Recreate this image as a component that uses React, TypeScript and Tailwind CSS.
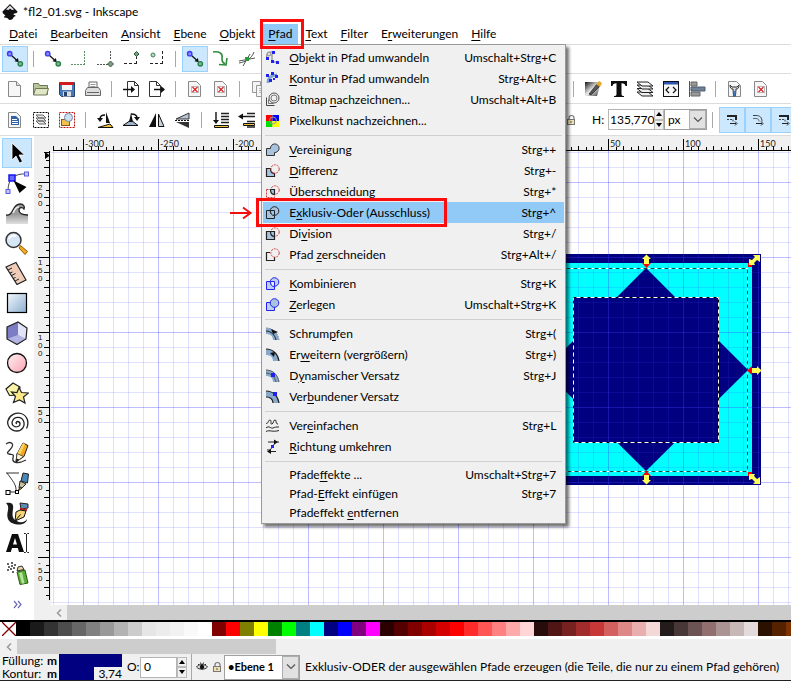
import { Fragment, ReactNode } from "react";

/* ---------- helpers ---------- */

// "[x]" marks the underlined access key of a label
function Label({ text }: { text: string }) {
  return (
    <span className="whitespace-pre">
      {text.split(/\[(.+?)\]/).map((part, i) =>
        i % 2 ? (
          <span key={i} className="underline underline-offset-2">
            {part}
          </span>
        ) : (
          <Fragment key={i}>{part}</Fragment>
        )
      )}
    </span>
  );
}

function Icon({ size, children }: { size: number; children: ReactNode }) {
  return (
    <svg
      width={size}
      height={size}
      viewBox={`0 0 ${size} ${size}`}
      fill="none"
      className="shrink-0"
      aria-hidden="true"
    >
      {children}
    </svg>
  );
}

/* ---------- toolbar icons (18 x 18) ---------- */

const page = (
  <path d="M2.500 1.500h8l4 4v11h-12z" fill="#f6f6f6" stroke="#888" />
);

const snapNodes = (
  <>
    <path d="M5 5l5.500 5" stroke="#111" strokeWidth="1.300" />
    <path d="M12.800 12.200l-4.300-.9 3.400-3.400z" fill="#111" />
    <circle cx="3.700" cy="3.700" r="2.200" fill="#8a8aff" stroke="#3c3cf0" strokeWidth="1.400" />
    <circle cx="14.300" cy="13.800" r="2.200" fill="#6fc08c" stroke="#2e7d4c" strokeWidth="1.400" />
  </>
);

const icons: Record<string, ReactNode> = {
  snapNodes,
  bboxEdge: (
    <path d="M14.500 1v14M1 14.500h13" stroke="#5d8f68" strokeDasharray="2 1" />
  ),
  bboxCorner: (
    <>
      <path d="M14.500 1v9M1 14.500h11" stroke="#555" strokeDasharray="2 1" />
      <path d="M14.500 11l3 3-3 3-3-3z" fill="#7d9b84" stroke="#3f5f46" />
    </>
  ),
  bboxMid: (
    <>
      <path d="M14.500 6v8M2 13.500h12" stroke="#222" strokeDasharray="3 2" />
      <path d="M14.500 1.500l2.500 2.500-2.500 2.500L12 4z" fill="#6fa67e" stroke="#33553b" />
    </>
  ),
  bboxCenter: (
    <>
      <path d="M14.500 1v13M2 13.500h12" stroke="#222" strokeDasharray="3 2" />
      <circle cx="5" cy="5" r="2" fill="#b9d8c0" stroke="#447a52" />
    </>
  ),
  snapPath: (
    <>
      <path d="M1 2c7-1 10 2 9 6 0 3 0 4 3 6" stroke="#2f8c3c" strokeWidth="1.600" />
      <path d="M7 14.500l7 .5 1-7" stroke="#2f8c3c" strokeWidth="1.600" />
    </>
  ),
  snapCross: (
    <>
      <path d="M1 13C8 12 14 8 16 2M1 11l16-3M5 16l7-12" stroke="#555" />
      <rect x="7" y="7" width="4" height="4" fill="#2f9a3c" />
    </>
  ),
  docNew: <>{page}<path d="M10.500 1.500v4h4" fill="#ddd" stroke="#888" /></>,
  docOpen: (
    <>
      <path d="M1.500 14.500v-11h5l1 2h8v9z" fill="#b9c59a" stroke="#6d7750" />
      <path d="M3.500 8.500h13l-2 6.500h-13z" fill="#dfe6c5" stroke="#6d7750" />
    </>
  ),
  save: (
    <>
      <path d="M1.500 2.500h15v14h-13l-2-2z" fill="#4778b8" stroke="#24426e" />
      <path d="M4 4h10v6H4z" fill="#f5f5f5" />
      <path d="M2 2h14v3H2z" fill="#d01c1c" />
      <path d="M5 11.500h8v5H5z" fill="#ddd" />
      <path d="M6 12h3v4H6z" fill="#24426e" />
    </>
  ),
  print: (
    <>
      <path d="M5 8V2h8v6" fill="#fff" stroke="#666" />
      <path d="M6.500 4.500h5M6.500 6.500h5" stroke="#999" />
      <path d="M1.500 15.500v-5l2-3h11l2 3v5z" fill="#ddd" stroke="#666" />
      <path d="M3 12.500h12" stroke="#666" />
    </>
  ),
  importDoc: (
    <>
      <path d="M5.500 1.500h7l4 4v11h-11z" fill="#fff" stroke="#333" />
      <path d="M12.500 1.500v4h4" stroke="#333" />
      <path d="M1 9.500h9" stroke="#111" strokeWidth="1.500" />
      <path d="M9 6l4 3.500L9 13z" fill="#111" />
    </>
  ),
  exportDoc: (
    <>
      <path d="M1.500 1.500h7l4 4v11h-11z" fill="#fff" stroke="#333" />
      <path d="M8.500 1.500v4h4" stroke="#333" />
      <path d="M6 9.500h8" stroke="#111" strokeWidth="1.500" />
      <path d="M13 6l4 3.500-4 3.500z" fill="#111" />
    </>
  ),
  docMissing: (
    <>
      {page}
      <rect x="5.500" y="6.500" width="7" height="6" fill="#fff" stroke="#bbb" />
      <path d="M6.500 7l5 5m0-5l-5 5" stroke="#e02020" strokeWidth="1.200" />
    </>
  ),
  copy: (
    <>
      <path d="M2.500 1.500h8v11h-8z" fill="#f5f5f5" stroke="#999" />
      <path d="M6.500 5.500h10v11h-10z" fill="#f5f5f5" stroke="#999" />
      <path d="M9 8.500h6M9 10.500h6M9 12.500h6" stroke="#bbb" />
    </>
  ),
  docProps: (
    <>
      {page}
      <path d="M5 5h5l3 3v6H5z" fill="#2f62a8" />
      <path d="M6 8.500h5M6 10.500h6M6 12.500h6" stroke="#fff" />
    </>
  ),
  selectLayers: (
    <>
      <rect x="1.500" y="1.500" width="15" height="15" stroke="#000" strokeDasharray="2 1" />
      <path d="M4 10h7l3 3H7zM4 7h7l3 3H7zM4 4h7l3 3H7z" fill="#e5e5e5" stroke="#666" />
    </>
  ),
  selectObjects: (
    <>
      <rect x="1.500" y="1.500" width="15" height="15" stroke="#c01010" strokeDasharray="2 1" />
      <rect x="3.500" y="8.500" width="8" height="6" fill="#f4c04a" stroke="#8c5a14" />
      <circle cx="10.500" cy="6.500" r="4" fill="#cfe0f4" stroke="#7089ab" />
    </>
  ),
  rotateLeft: (
    <>
      <path d="M2 16.500h15l-3-3.500z" fill="#f2c53a" stroke="#111" />
      <path d="M10 12V1l4 11z" fill="#111" />
      <path d="M9 4C5 4 4 6 4 8" stroke="#111" strokeWidth="1.500" />
      <path d="M1 7h6l-3 4z" fill="#111" />
    </>
  ),
  rotateRight: (
    <>
      <path d="M1 14.500h15L9 9z" fill="#9fb4cc" stroke="#111" />
      <path d="M7 11l2-9 2 9z" fill="#111" />
      <path d="M9 3c4 0 6 1 6 4" stroke="#111" strokeWidth="1.500" />
      <path d="M12 6h6l-3 4z" fill="#111" />
    </>
  ),
  flipH: (
    <>
      <path d="M8 2v14H1z" fill="#111" />
      <path d="M10.500 3v12.500h5.500z" fill="#c9d2dc" stroke="#111" />
    </>
  ),
  flipV: (
    <>
      <path d="M15 2v6H2z" fill="#b5c3d4" stroke="#333" />
      <path d="M1 9.500h15" stroke="#111" strokeDasharray="2 1" />
      <path d="M15 11v6L2 11z" fill="#333" />
    </>
  ),
  lower: (
    <>
      <path d="M9 2.500h8M9 5.500h8M9 8.500h8M9 11.500h8" stroke="#222" strokeWidth="1.600" />
      <path d="M4 1v10" stroke="#111" strokeWidth="1.400" />
      <path d="M1 9h6l-3 4z" fill="#111" />
      <path d="M2.500 14.500h14v2h-14z" fill="#f2c53a" stroke="#111" />
    </>
  ),
  lowerOne: (
    <>
      <path d="M9 2.500h8M9 5.500h8M9 10.500h8M9 16h8" stroke="#222" strokeWidth="1.600" />
      <path d="M3 5.500h6" stroke="#111" strokeWidth="1.400" />
      <path d="M5 2.500v6L0 5.500z" fill="#111" />
      <path d="M5.500 12.500h11v2h-11z" fill="#f2c53a" stroke="#111" />
    </>
  ),
  fillStroke: (
    <>
      <defs>
        <linearGradient id="steel" x1="0" y1="0" x2="1" y2="1">
          <stop offset="0" stopColor="#111" />
          <stop offset=".5" stopColor="#eee" />
          <stop offset="1" stopColor="#222" />
        </linearGradient>
      </defs>
      <path d="M1 2h16l-4 14H1z" fill="url(#steel)" />
      <path d="M5 14l8-10 3 2-9 9z" fill="#555" stroke="#222" strokeWidth=".7" />
      <path d="M12 4l3-3 3 2-2 4z" fill="#e4a82c" />
    </>
  ),
  textTool: <path d="M1 1h16v5h-1.500c-.3-2-1.500-2.800-4-2.800V14c0 1.500.6 2 2.500 2v1H4v-1c1.900 0 2.500-.5 2.500-2V3.200c-2.500 0-3.700.8-4 2.800H1z" fill="#0d0d0d" />,
  layers: (
    <>
      <path d="M1 12h11l5 4H6z" fill="#eee" stroke="#222" />
      <path d="M1 8.500h11l5 4H6z" fill="#eee" stroke="#222" />
      <path d="M1 5h11l5 4H6z" fill="#eee" stroke="#222" />
      <path d="M1 2h11l5 4H6z" fill="#fafafa" stroke="#222" />
    </>
  ),
  xml: (
    <>
      <rect x="1.500" y="1.500" width="15" height="15" fill="#f7f7f7" stroke="#111" />
      <path d="M2 2h14v2.500H2z" fill="#2f55b0" />
      <path d="M7 7l-3 3 3 3M11 7l3 3-3 3" stroke="#111" strokeWidth="1.200" />
    </>
  ),
  align: (
    <>
      <path d="M1.500 1v16" stroke="#d02020" />
      <path d="M3 2h6v4H3zM3 12h9v4H3z" fill="#999" stroke="#666" />
      <path d="M3 7h14v4H3z" fill="#6f8296" stroke="#4e5d6e" />
    </>
  ),
  prefs: (
    <>
      {page}
      <path d="M4 5c0 3 1 4 3 4l.5 7h2L10 9c2 0 3-1 3-4l-2 2H6z" fill="#d0d7de" stroke="#333" />
      <path d="M7.500 11h2v5h-2z" fill="#3d74b8" />
    </>
  ),
  scaleStroke: (
    <>
      <path d="M4 5h9v4" stroke="#222" strokeWidth="2" />
      <path d="M4 8.500h6v2" stroke="#444" strokeDasharray="2 1" />
      <path d="M7 12.500h6M12 10.500l2 2-2 2" stroke="#222" />
    </>
  ),
  scaleCorners: (
    <>
      <path d="M4 4.500h3c4 0 6 2 6 6" stroke="#444" />
      <path d="M4 7.500h3c2 0 3 1 3 3" stroke="#666" />
      <path d="M7 12.500h6M12 10.500l2 2-2 2" stroke="#222" />
    </>
  ),
};

/* ---------- toolbox icons (24 x 24) ---------- */

const tools: { name: string; icon: ReactNode }[] = [
  {
    name: "Auswahl",
    icon: <path d="M7 2v17l4-4 3.500 7 3-1.500-3.500-6.500h5.500z" fill="#000" stroke="#fff" strokeWidth=".8" />,
  },
  {
    name: "Knoten",
    icon: (
      <>
        <path d="M3 20C3 8 9 2 22 3" stroke="#444" />
        <rect x="1" y="18.500" width="4" height="4" fill="#c5c5ff" stroke="#5a5ae0" />
        <rect x="19.500" y="1" width="4" height="4" fill="#c5c5ff" stroke="#5a5ae0" />
        <rect x="4" y="4" width="6" height="6" fill="#6a6aff" stroke="#1616f0" strokeWidth="1.500" />
        <path d="M8.500 9.500l13 6.500-7 6z" fill="#000" />
      </>
    ),
  },
  {
    name: "Modellieren",
    icon: (
      <>
        <defs>
          <linearGradient id="wave" x1="0" y1="0" x2="0" y2="1">
            <stop offset=".5" stopColor="#999" />
            <stop offset="1" stopColor="#e0e0e0" />
          </linearGradient>
        </defs>
        <path d="M1 14c8 1 6-11 14-11 4 0 5 3 4 5-1-2-5-2-5 1 0 3 2 5 9 5v9H1z" fill="url(#wave)" />
        <path d="M1 14c8 1 6-11 14-11 4 0 5 3 4 5-1-2-5-2-5 1 0 3 2 5 9 5" stroke="#222" strokeWidth="1.300" />
        <path d="M8 12c2-4 3-6 6-6" stroke="#eee" strokeWidth="1.500" />
      </>
    ),
  },
  {
    name: "Zoom",
    icon: (
      <>
        <path d="M15.500 14.500l7 6-2.500 3-6-6.500z" fill="#f5a91c" stroke="#8b5a00" />
        <circle cx="8.500" cy="9" r="7.500" fill="#d6e6f7" stroke="#333" strokeWidth="1.500" />
        <path d="M4 8c1-3 4-4 7-3" stroke="#fff" strokeWidth="2" />
      </>
    ),
  },
  {
    name: "Messen",
    icon: (
      <>
        <path d="M1 6l10-4.500L21 19l-9 4.500z" fill="#f1cdb9" stroke="#222" strokeWidth="1.200" />
        <path d="M3 9l4-2M5 12l2.500-1M6.500 14.500l4-2M8 17.500l2.500-1M10 20l4-2" stroke="#222" />
      </>
    ),
  },
  {
    name: "Rechteck",
    icon: (
      <>
        <defs>
          <linearGradient id="sky" x1="0" y1="0" x2="1" y2="1">
            <stop offset="0" stopColor="#f2f7fb" />
            <stop offset="1" stopColor="#8bafd0" />
          </linearGradient>
        </defs>
        <rect x="2.500" y="2.500" width="19" height="19" fill="url(#sky)" stroke="#000" strokeWidth="1.200" />
      </>
    ),
  },
  {
    name: "3D-Box",
    icon: (
      <>
        <path d="M2 6l11-5 9 6-1 11-9 5.500L2 18z" fill="#9a9ad6" />
        <path d="M2 6l11-5v13l-11 4z" fill="#7c7cc4" />
        <path d="M13 1l9 6-1 11-8-4z" fill="#e3e3f8" />
        <path d="M2 18l11-4 8 4-9 5.500z" fill="#b4b4e4" />
        <path d="M2 6l11-5 9 6-1 11-9 5.500L2 18z" stroke="#222" strokeWidth="1.200" />
      </>
    ),
  },
  {
    name: "Ellipse",
    icon: (
      <>
        <defs>
          <linearGradient id="rose" x1="0" y1="0" x2="1" y2="1">
            <stop offset="0" stopColor="#fff2f4" />
            <stop offset="1" stopColor="#f9a3b0" />
          </linearGradient>
        </defs>
        <circle cx="12" cy="12" r="9.500" fill="url(#rose)" stroke="#111" strokeWidth="1.300" />
      </>
    ),
  },
  {
    name: "Stern",
    icon: (
      <>
        <path d="M8 2l7 4-1.500 8-9 .5L1 8z" fill="#fbf3a8" stroke="#222" strokeWidth="1.200" />
        <path d="M14 6.500l2.500 5 7 .5-5 4 1.500 6-5.500-3-6 2.500 2-6-4-4.500 5.500.5z" fill="#fbe98a" stroke="#222" strokeWidth="1.200" />
      </>
    ),
  },
  {
    name: "Spirale",
    icon: (
      <path
        d="M12 12.500c-1.500.5-1-2 .5-2 3 0 3.500 4 .5 5-4 1.500-7-2-5.500-5.500 2-5 9-4.500 11 0C20.500 15 17 20 12 20 5.500 20 1.500 14.500 3 9.500 4.500 4 11 1 16 2.500c6.500 2 8.500 9 5.500 15"
        stroke="#222"
        strokeWidth="1.300"
      />
    ),
  },
  {
    name: "Freihand",
    icon: (
      <>
        <path d="M1 3c4-3 8-1 6 3s-7 6-3 7 5 0 4 4 3 7 13 2" stroke="#333" strokeWidth="1.300" />
        <path d="M11 21l1-8 6-11 5 2.500-4 11z" fill="#f6a81c" stroke="#222" />
        <path d="M12 13l6-11 2 1-5 11z" fill="#fbd665" />
        <path d="M12 12.500l6.500 3L11 21z" fill="#fff3cf" stroke="#222" strokeWidth=".7" />
        <path d="M11.500 17.500l2.500 1L11 21.500z" fill="#111" />
      </>
    ),
  },
  {
    name: "Bézier",
    icon: (
      <>
        <path d="M1 2h13M2 2c5 7 10 12 9 19h-8" stroke="#333" />
        <path d="M16 10l2-8 5.500 1-1 9z" fill="#4a86b8" stroke="#222" />
        <path d="M15 10l6 3-5 5-2-1z" fill="#c8bfa4" stroke="#222" />
        <path d="M13 20l2-4 2 1z" fill="#f0ad24" stroke="#222" />
        <rect x="1" y="19.500" width="4" height="4" fill="#fff" stroke="#000" />
        <rect x="10.500" y="19.500" width="3" height="3" fill="#fff" stroke="#000" />
      </>
    ),
  },
  {
    name: "Kalligrafie",
    icon: (
      <>
        <path d="M1 2c5-1 8 0 7 6-1 7-1 11 6 13 4 1 7-1 8-3 0 4-5 6-10 5.500C3 22.500 1 17 3 9c.5-3 0-5-2-7z" fill="#1a1a1a" />
        <path d="M15 2l8 1v4l-7 1z" fill="#5b8db4" stroke="#222" />
        <path d="M15 7l7 1v2l-7-1z" fill="#c22020" />
        <path d="M10 20l1-9 4-2 6 1-2 6z" fill="#f3d67a" stroke="#111" />
        <path d="M10.500 19.500l5-6" stroke="#111" />
      </>
    ),
  },
  {
    name: "Text",
    icon: (
      <>
        <path d="M1 21l6-18h6l6 18h-5l-1.200-4H7l-1.200 4zM8 13.500h4L10 7z" fill="#0c0c0c" />
        <path d="M19 2.500h1.500l1 1 1-1H24M21.500 3v18M19 21.500h1.500l1-1 1 1H24" stroke="#222" />
      </>
    ),
  },
  {
    name: "Sprühdose",
    icon: (
      <>
        <path d="M12 11l8-2 3 13-8 1.500z" fill="#5cae3a" stroke="#2b5a17" />
        <path d="M14 12l3-.7 2.500 11-2.500.5z" fill="#b5e39b" />
        <path d="M12 10l1-4 4-1 2 3.500z" fill="#e8d7a0" stroke="#333" />
        <path d="M2 3h2M6 2h2M9 4h2M3 6h2M6 5h2M2 9h2M5 8h2M8 7h2M7 11h2" stroke="#333" strokeWidth="1.500" />
      </>
    ),
  },
];

/* ---------- menu icons (16 x 16) ---------- */

const square = "M1.500 5.500h8v8h-8z";
const arcBand = "M1 2c7 0 12 5 13 12H8C8 10 5 8 1 8z";

const menuIcons: Record<string, ReactNode> = {
  objectToPath: (
    <>
      <path d="M2 9C1 3 3 2 7 2M7 4v8h6" stroke="#777" />
      <circle cx="4" cy="4" r="2" fill="#ddd" stroke="#888" />
      <path d="M7 1h3v3H7zM1 7h3v3H1zM6 10h3v3H6zM11 11h3v3h-3z" fill="#2020f0" />
    </>
  ),
  strokeToPath: (
    <>
      <path d="M3 12c0-5 3-8 9-8" stroke="#7fa4d0" strokeWidth="3" />
      <path d="M1 3h3v3H1zM6 1h3v3H6zM10 4h3v3h-3zM4 8h3v3H4zM8 7h2v2H8z" fill="#2020f0" />
    </>
  ),
  trace: (
    <>
      <path d="M1.500 5.500v8h8" stroke="#444" />
      <path d="M3.500 7.500v4h5" stroke="#777" />
      <circle cx="9" cy="6" r="5" stroke="#555" />
      <circle cx="9" cy="6" r="3" stroke="#777" />
    </>
  ),
  pixelArt: (
    <>
      <path d="M1 2h6.500v6H1z" fill="#f00" />
      <path d="M7.500 2H14v6H7.500z" fill="#00f" />
      <path d="M1 8h6.500v6H1z" fill="#0d0" />
      <path d="M7.500 8H14v6H7.500z" fill="#ff0" />
      <circle cx="8" cy="7.500" r="3.500" stroke="#999" />
    </>
  ),
  union: (
    <path d="M1.500 6.500h4a4.300 4.300 0 1 1 4 4v3h-8z" fill="#a9c3de" stroke="#333" />
  ),
  difference: (
    <>
      <path d="M1.500 5.500h4c0 3 1 5 4 5v3h-8z" fill="#a9c3de" stroke="#222" strokeWidth="1.200" />
      <circle cx="10" cy="6" r="4.200" stroke="#d04040" strokeDasharray="2 1" />
    </>
  ),
  intersection: (
    <>
      <path d={square} stroke="#d04040" strokeDasharray="2 1" />
      <circle cx="10" cy="6" r="4.200" stroke="#d04040" strokeDasharray="2 1" />
      <path d="M5.500 5.500h4v5c-3 0-4-2-4-5z" fill="#a9c3de" stroke="#222" strokeWidth="1.200" />
    </>
  ),
  exclusion: (
    <>
      <path d={square} fill="#a9c3de" stroke="#222" />
      <circle cx="9.500" cy="6" r="4.300" fill="#a9c3de" stroke="#222" />
      <path d="M5.500 5.500h4v5c-3 0-4-2-4-5z" fill="#91c9f7" stroke="#222" />
    </>
  ),
  division: (
    <>
      <circle cx="10" cy="6" r="4.200" stroke="#d04040" strokeDasharray="2 1" />
      <path d={square} fill="#a9c3de" stroke="#222" strokeWidth="1.200" />
      <path d="M5.500 5.500c0 3 1 5 4 5" stroke="#222" strokeWidth="1.200" />
    </>
  ),
  cut: (
    <>
      <path d="M5 5.500H1.500v8h8V10" stroke="#222" strokeWidth="1.200" />
      <circle cx="10" cy="6" r="4.200" stroke="#d04040" strokeDasharray="2 1" />
    </>
  ),
  combine: (
    <>
      <path d={square} fill="#bcd0f0" stroke="#2222f0" />
      <circle cx="9.500" cy="6" r="4.300" fill="#bcd0f0" stroke="#2222f0" />
      <path d="M5.500 5.500h4v5c-3 0-4-2-4-5z" fill="#f0f0f0" stroke="#2222f0" />
    </>
  ),
  breakApart: (
    <>
      <path d={square} fill="#bcd0f0" stroke="#2222f0" />
      <circle cx="9.500" cy="6" r="4.300" fill="#a9c3de" stroke="#2222f0" />
    </>
  ),
  inset: (
    <>
      <path d={arcBand} fill="#86a9cc" />
      <path d="M1 2c7 0 12 5 13 12" stroke="#88a" strokeDasharray="2 1" />
      <path d="M1 5c5 0 9 4 10 9" stroke="#222" />
      <path d="M13 6L6 3l2 5z" fill="#111" />
    </>
  ),
  outset: (
    <>
      <path d={arcBand} fill="#86a9cc" />
      <path d="M1 2c7 0 12 5 13 12" stroke="#222" strokeWidth="1.200" />
      <path d="M10 5L5 6l4 4z" fill="#111" />
    </>
  ),
  dynamicOffset: (
    <>
      <path d={arcBand} fill="#86a9cc" />
      <path d="M1 2c7 0 12 5 13 12M1 5c5 0 9 4 10 9" stroke="#555" />
      <path d="M6 5h4v4H6z" fill="#2222f0" />
    </>
  ),
  linkedOffset: (
    <>
      <path d={arcBand} fill="#86a9cc" />
      <path d="M1 2c7 0 12 5 13 12M1 8c4 0 7 2 7 6" stroke="#222" strokeWidth="1.200" />
      <path d="M8 3h4v4H8z" fill="#2222f0" />
    </>
  ),
  simplify: (
    <path
      d="M1 5c2 2 2-3 4-3s0 5 2 4 1-4 3-4 0 4 3 4M1 10c3-3 5 1 7 0s3-1 6-1M1 13.500c4-2 6 1 13-1"
      stroke="#222"
    />
  ),
  reverse: (
    <>
      <path d="M3 3h7M5 12.500h6M2 11c4 0 4-1 6-4s2-4 6-4" stroke="#222" />
      <path d="M9 .5L13 3 9 5.500zM6 10l-4 2.500L6 15z" fill="#111" />
      <path d="M6 6h3v3H6z" fill="#2222f0" />
    </>
  ),
};

type MenuEntry = { label: string; keys?: string; icon?: string; active?: boolean };

const pathMenu: MenuEntry[][] = [
  [
    { label: "[O]bjekt in Pfad umwandeln", keys: "Umschalt+Strg+C", icon: "objectToPath" },
    { label: "[K]ontur in Pfad umwandeln", keys: "Strg+Alt+C", icon: "strokeToPath" },
    { label: "Bitmap [n]achzeichnen...", keys: "Umschalt+Alt+B", icon: "trace" },
    { label: "Pixelkunst nachzeichnen...", icon: "pixelArt" },
  ],
  [
    { label: "[V]ereinigung", keys: "Strg++", icon: "union" },
    { label: "[D]ifferenz", keys: "Strg+-", icon: "difference" },
    { label: "[Üb]erschneidung", keys: "Strg+*", icon: "intersection" },
    { label: "E[x]klusiv-Oder (Ausschluss)", keys: "Strg+^", icon: "exclusion", active: true },
    { label: "Di[v]ision", keys: "Strg+/", icon: "division" },
    { label: "Pfad [z]erschneiden", keys: "Strg+Alt+/", icon: "cut" },
  ],
  [
    { label: "[K]ombinieren", keys: "Strg+K", icon: "combine" },
    { label: "[Z]erlegen", keys: "Umschalt+Strg+K", icon: "breakApart" },
  ],
  [
    { label: "Schrum[p]fen", keys: "Strg+(", icon: "inset" },
    { label: "Er[w]eitern (vergrößern)", keys: "Strg+)", icon: "outset" },
    { label: "D[y]namischer Versatz", keys: "Strg+J", icon: "dynamicOffset" },
    { label: "Ver[b]undener Versatz", icon: "linkedOffset" },
  ],
  [
    { label: "Ver[e]infachen", keys: "Strg+L", icon: "simplify" },
    { label: "[R]ichtung umkehren", icon: "reverse" },
  ],
  [
    { label: "Pfade[f]fekte ...", keys: "Umschalt+Strg+7" },
    { label: "Pfad-[E]ffekt einfügen", keys: "Strg+7" },
    { label: "Pfadeffekt [e]ntfernen" },
  ],
];

function PathMenu() {
  return (
    <div
      role="menu"
      className="absolute left-0 top-full z-20 w-[305px] border border-[#999] bg-[#f0f0f0] px-px pb-px pt-[2px] shadow-[3px_3px_3px_rgba(0,0,0,0.55)]"
    >
      {pathMenu.map((group, g) => (
        <Fragment key={g}>
          {g > 0 && (
            <div className="flex h-2 items-center px-[2px]">
              <hr className="w-full border-t border-[#d0d0d0]" />
            </div>
          )}
          {group.map((entry) => (
            <button
              key={entry.label}
              role="menuitem"
              className={`relative flex w-full items-center pl-[2px] pr-2 text-left ${
                entry.icon ? "h-[21px]" : "h-[19px]"
              } ${entry.active ? "bg-[#91c9f7]" : ""}`}
            >
              <span className="mr-2 flex w-4 shrink-0">
                {entry.icon && <Icon size={16}>{menuIcons[entry.icon]}</Icon>}
              </span>
              <span className="flex-1">
                <Label text={entry.label} />
              </span>
              {entry.keys && <span>{entry.keys}</span>}
              {entry.active && <Highlight />}
            </button>
          ))}
        </Fragment>
      ))}
    </div>
  );
}

// red frame and arrow pointing at the active entry
function Highlight() {
  return (
    <span className="pointer-events-none absolute -left-[7px] -top-1 flex h-[29px] w-[191px] border-[3px] border-[#fb0d0d]">
      <svg width="24" height="14" viewBox="0 0 24 14" fill="none" className="absolute -left-[30px] top-[5px]">
        <path d="M1 7h20M14 1.500L21.500 7 14 12.500" stroke="#f01010" strokeWidth="2" />
      </svg>
    </span>
  );
}

/* ---------- bars ---------- */

const menus = [
  "[D]atei",
  "[B]earbeiten",
  "[A]nsicht",
  "[E]bene",
  "[O]bjekt",
  "[P]fad",
  "[T]ext",
  "[F]ilter",
  "E[r]weiterungen",
  "[H]ilfe",
];

function MenuBar() {
  return (
    <nav className="flex h-5 pl-[2px]">
      {menus.map((label) =>
        label === "[P]fad" ? (
          <div key={label} className="relative flex">
            <button className="bg-[#91c9f7] pl-[7px] pr-[6px]">
              <Label text={label} />
            </button>
            <PathMenu />
            <span className="pointer-events-none absolute -left-px -top-[5px] z-30 h-[30px] w-[44px] border-[3px] border-[#fb0d0d]" />
          </div>
        ) : (
          <button key={label} className="pl-[7px] pr-[6px]">
            <Label text={label} />
          </button>
        )
      )}
    </nav>
  );
}

function ToolButtons({ items }: { items: string[] }) {
  return (
    <>
      {items.map((item, i) => {
        if (item === "|")
          return <span key={i} className="mx-[5px] h-4 w-[2px] shrink-0 border-l border-[#a8a8a8]" />;
        const active = item.startsWith("*");
        const name = item.replace("*", "");
        return (
          <button
            key={i}
            aria-label={name}
            className={`flex h-[26px] w-[26px] shrink-0 items-center justify-center ${
              active ? "border border-[#99d1ff] bg-[#cce8ff]" : ""
            }`}
          >
            <Icon size={18}>{icons[name]}</Icon>
          </button>
        );
      })}
    </>
  );
}

function Lock() {
  return (
    <Icon size={12}>
      <path d="M4 6V4a2.500 2.500 0 0 1 5 0v2" stroke="#777" strokeWidth="1.200" />
      <rect x="2.500" y="5.500" width="7" height="5" fill="#efe2b0" stroke="#777" />
      <path d="M6 7v2" stroke="#555" />
    </Icon>
  );
}

function Spin() {
  return (
    <div className="flex w-[10px] flex-col">
      <button aria-label="mehr" className="flex flex-1 items-center justify-center border border-[#bbb] bg-[#f0f0f0]">
        <svg width="6" height="4" viewBox="0 0 6 4"><path d="M0 4l3-4 3 4z" /></svg>
      </button>
      <button aria-label="weniger" className="flex flex-1 items-center justify-center border border-[#bbb] bg-[#f0f0f0]">
        <svg width="6" height="4" viewBox="0 0 6 4"><path d="M0 0h6L3 4z" /></svg>
      </button>
    </div>
  );
}

function DropDown({ label, value, className }: { label: string; value: string; className: string }) {
  return (
    <div className={`relative border border-[#a0a0a0] bg-white ${className}`}>
      <select aria-label={label} defaultValue={value} className="h-full w-full appearance-none pl-[3px] outline-none">
        <option>{value}</option>
      </select>
      <span className="pointer-events-none absolute inset-y-0 right-0 flex w-[17px] items-center justify-center border border-[#adadad] bg-[#e1e1e1]">
        <svg width="10" height="6" viewBox="0 0 10 6" fill="none">
          <path d="M1 .5l4 4 4-4" stroke="#555" strokeWidth="1.200" />
        </svg>
      </span>
    </div>
  );
}

function Toolbars() {
  return (
    <>
      <div className="flex h-[30px] items-center border-y border-[#dcdcdc] pl-[2px]">
        <ToolButtons
          items={["*snapNodes", "|", "snapNodes", "bboxEdge", "bboxCorner", "bboxMid", "bboxCenter", "|", "*snapNodes", "snapPath", "snapCross"]}
        />
      </div>
      <div className="flex h-[30px] items-center border-b border-[#dcdcdc]">
        <div className="flex w-[568px] shrink-0 items-center pl-[2px]">
          <ToolButtons
            items={["docNew", "docOpen", "save", "print", "|", "importDoc", "exportDoc", "|", "docMissing", "docMissing", "|", "copy"]}
          />
        </div>
        <ToolButtons
          items={["|", "fillStroke", "textTool", "layers", "xml", "align", "|", "prefs", "docMissing"]}
        />
      </div>
      <div className="flex h-8 items-center overflow-hidden border-b border-[#dcdcdc]">
        <div className="flex w-[565px] shrink-0 items-center pl-[2px]">
          <ToolButtons
            items={["docProps", "selectLayers", "selectObjects", "|", "rotateLeft", "rotateRight", "flipH", "flipV", "|", "lower", "lowerOne"]}
          />
        </div>
        <Lock />
        <label htmlFor="height" className="ml-[15px] w-4 shrink-0">
          H:
        </label>
        <div className="flex h-[21px] shrink-0">
          <input
            id="height"
            defaultValue="135,770"
            className="w-[46px] border border-r-0 border-[#b5b5b5] bg-white pl-px outline-none"
          />
          <Spin />
        </div>
        <DropDown label="Einheit" value="px" className="h-[21px] w-[43px] shrink-0" />
        <ToolButtons items={["|", "*scaleStroke", "*scaleCorners", "*scaleStroke"]} />
      </div>
    </>
  );
}

function Toolbox() {
  return (
    <aside className="flex w-[34px] shrink-0 flex-col items-center bg-white pt-[2px]">
      {tools.map((tool, i) => (
        <button
          key={tool.name}
          aria-label={tool.name}
          className={`flex h-[30px] w-[30px] items-center justify-center ${
            i === 0 ? "border border-[#99d1ff] bg-[#cce8ff]" : ""
          }`}
        >
          <Icon size={24}>{tool.icon}</Icon>
        </button>
      ))}
      <button aria-label="Weitere Werkzeuge" className="mt-3 flex h-[18px] items-start">
        <svg width="9" height="9" viewBox="0 0 9 9" fill="none">
          <path d="M1 1l3 3.500L1 8M5 1l3 3.500L5 8" stroke="#6a6ab8" strokeWidth="1.200" />
        </svg>
      </button>
    </aside>
  );
}

/* ---------- canvas ---------- */

const STEP = 75; // 50 user units

// the stretch between -200 and 50 lies under the open menu
const rulerLabels = [-300, -250, -200, 50, 100, 150];

function HorizontalRuler() {
  const ticks = Array.from({ length: 240 }, (_, i) => i);
  return (
    <svg className="ml-[17px] h-[15px] w-0 flex-1" aria-hidden="true">
      {ticks.map((i) => (
        <path
          key={i}
          d={`M${Math.round(2 + i * 7.5) + 0.5} ${i % 10 === 4 ? 3 : i % 2 ? 11 : 10}v12`}
          stroke="#000"
        />
      ))}
      {rulerLabels.map((value) => (
        <text key={value} x={34 + ((value + 300) / 50) * STEP} y="11" fontSize="9" fill="#222">
          {value}
        </text>
      ))}
      <path d="M2 14.500h3000" stroke="#000" />
    </svg>
  );
}

function VerticalRuler() {
  const ticks = Array.from({ length: 60 }, (_, i) => i);
  const labels = [200, 150, 100, 50, 0, -50];
  return (
    <svg className="w-[17px] shrink-0 font-['Liberation_Sans',sans-serif]" aria-hidden="true">
      {ticks.map((i) => (
        <path
          key={i}
          d={`M${i % 10 === 4 ? 4 : i % 2 ? 12 : 10} ${Math.round(1 + i * 7.5) + 0.5}H16`}
          stroke="#000"
        />
      ))}
      {labels.map((value, row) =>
        String(value)
          .split("")
          .map((c, n) => (
            <text key={`${value}${n}`} x="4" y={39 + row * STEP + n * 8} fontSize="8" fill="#111">
              {c}
            </text>
          ))
      )}
      <path d="M15.500 0v449" stroke="#000" />
      <path d="M11 1l5 3.500-5 3.500z" />
    </svg>
  );
}

const upArrow = "M0-5.500L4.500-1H2.500v5h-5v-5h-2z";

function Canvas() {
  return (
    <svg className="w-0 flex-1 bg-white" role="img" aria-label="Zeichenfläche">
      <defs>
        <pattern id="minor" x="2" y="1" width="15" height="15" patternUnits="userSpaceOnUse">
          <path d="M.5 0v15M0 .5h15" stroke="#3f3fff" strokeOpacity=".16" />
        </pattern>
        <pattern id="major" x="32" y="31" width="75" height="75" patternUnits="userSpaceOnUse">
          <path d="M.5 0v75M0 .5h75" stroke="#3f3fff" strokeOpacity=".22" />
        </pattern>
      </defs>
      <g transform="translate(480 103)">
        <path d="M0 0h230v231H0z" fill="#000080" />
        <path d="M9 9h212v213H9z" fill="#00ffff" />
        <path d="M115 14l102 102-102 101L13 116z" fill="#000080" />
        <path d="M43 43h145v145H43z" fill="#000080" />
      </g>
      <rect width="100%" height="100%" fill="url(#minor)" />
      <rect width="100%" height="100%" fill="url(#major)" />
      <g transform="translate(480 103)">
        <path d="M14.500 14.500h202v203h-202z" fill="none" stroke="#fff" />
        <path d="M14.500 14.500h202v203h-202z" fill="none" stroke="#055" strokeDasharray="4 3" />
        <path d="M42.500 43.500h145v145h-145z" fill="none" stroke="#fff" />
        <path d="M42.500 43.500h145v145h-145z" fill="none" stroke="#000" strokeDasharray="3 4" />
        <g fill="#f00">
          <path d="M111 9h9l-4.500 5zM111 222h9l-4.500-5zM221 112v9l-5-4.500zM217 9h4v4h-4zM217 218h4v4h-4z" />
        </g>
        <g fill="#ffff55">
          <path d={upArrow} transform="translate(115.500 6)" />
          <path d={upArrow} transform="translate(115.500 225) rotate(180)" />
          <path d={upArrow} transform="translate(225 116.500) rotate(90)" />
          <path d="M218 5v6h6l-1-2 3-3 3 2V1h-7l2 2-3 3zM218 226v-6h6l-1 2 3 3 3-2v7h-7l2-2-3-3z" />
        </g>
      </g>
    </svg>
  );
}

function ScrollBar({ thumb }: { thumb: string }) {
  return (
    <div className="flex h-[15px] shrink-0 bg-[#f0f0f0]">
      <button aria-label="Nach links" className="flex w-[17px] shrink-0 items-center justify-center">
        <svg width="6" height="8" viewBox="0 0 6 8" fill="none">
          <path d="M5 .5L1.500 4 5 7.500" stroke="#999" strokeWidth="1.500" />
        </svg>
      </button>
      <div className={`bg-[#cdcdcd] ${thumb}`} />
    </div>
  );
}

/* ---------- palette and status ---------- */

const palette = [
  "#000000", "#1a1a1a", "#333333", "#4d4d4d", "#666666", "#808080", "#999999",
  "#b3b3b3", "#cccccc", "#e6e6e6", "#ececec", "#f2f2f2", "#f9f9f9", "#ffffff",
  "#800000", "#ff0000", "#808000", "#ffff00", "#008000", "#00ff00", "#008080",
  "#00ffff", "#000080", "#0000ff", "#800080", "#ff00ff", "#2b0000", "#550000",
  "#800000", "#aa0000", "#d40000", "#ff0000", "#ff2a2a", "#ff5555", "#ff8080",
  "#ffaaaa", "#ffd5d5", "#280b0b", "#501616", "#782121", "#a02c2c", "#c83737",
  "#d35f5f", "#de8787", "#e9afaf", "#f4d7d7", "#241c1c", "#483737", "#6c5353",
  "#916f6f", "#ac9393", "#c8b7b7", "#e3dbdb", "#2b1100", "#552200", "#803300",
  "#aa4400", "#d45500",
];

function Palette() {
  return (
    <div className="flex h-[19px] shrink-0 overflow-hidden border-b-[3px] border-t-2 border-b-white border-t-black pl-[2px]">
      <button aria-label="Keine Farbe" className="w-[14px] shrink-0 bg-white">
        <svg width="14" height="14" viewBox="0 0 14 14">
          <path d="M0 0l14 14M14 0L0 14" stroke="#800000" strokeWidth="1.300" />
        </svg>
      </button>
      {palette.map((color, i) => (
        <button key={i} aria-label={color} className="w-[14px] shrink-0" style={{ backgroundColor: color }} />
      ))}
    </div>
  );
}

function StatusBar() {
  return (
    <footer className="flex h-[27px] shrink-0 items-center overflow-hidden border-b border-[#222] bg-[#f0f0f0] pl-[2px]">
      <div className="grid w-[57px] shrink-0 grid-cols-[45px_12px] leading-[13px]">
        <span>Füllung:</span>
        <b>m</b>
        <span>Kontur:</span>
        <b>m</b>
      </div>
      <div className="flex h-full w-[63px] shrink-0 items-end justify-end bg-[#000080]">
        <span className="bg-[#f0f0f0] pl-1 leading-[13px]">3,74</span>
      </div>
      <label htmlFor="opacity" className="ml-[5px] w-[13px] shrink-0">
        O:
      </label>
      <div className="flex h-[21px] shrink-0">
        <input id="opacity" defaultValue="0" className="w-[37px] border border-[#b5b5b5] bg-white pl-[3px] outline-none" />
        <Spin />
      </div>
      <span className="ml-1 mr-[3px] h-full w-[2px] shrink-0 border-l border-[#a8a8a8]" />
      <button aria-label="Ebene sichtbar" className="shrink-0">
        <Icon size={12}>
          <path d="M.5 6C3 2.500 9 2.500 11.500 6 9 9 3 9 .5 6z" fill="#ddd" stroke="#333" />
          <circle cx="6" cy="6" r="2.200" fill="#111" />
          <path d="M2 3l1 1M4.500 1.500l.5 1.500M7.500 1.500L7 3M10 3L9 4" stroke="#333" />
        </Icon>
      </button>
      <button aria-label="Ebene sperren" className="ml-[3px] mr-px shrink-0">
        <Lock />
      </button>
      <DropDown label="Ebene" value="•Ebene 1" className="h-[25px] w-[76px] shrink-0 text-[11px] font-bold" />
      <p className="ml-[5px] whitespace-nowrap">
        Exklusiv-ODER der ausgewählen Pfade erzeugen (die Teile, die nur zu einem Pfad gehören)
      </p>
    </footer>
  );
}

export default function App() {
  return (
    <div className="flex min-h-screen flex-col overflow-hidden bg-white font-['Lato','Open_Sans',sans-serif] text-[12px] leading-4 text-black">
      <header className="flex h-6 items-center pl-[2px]">
        <Icon size={16}>
          <path d="M8 0l7.500 7.500c0 2-3 1.500-4 2.500s3 1 2 2-2 .5-2 1.500S9.500 16 8 16s-1.500-1.500-3-2-3 0-3-1 2-1 1-2-2.500-1-2.500-3.500z" fill="#111" />
          <path d="M8 1.500l4 4-2 .5-2-1.500L6.500 6 4 5.500z" fill="#dfe5ee" />
        </Icon>
        <h1 className="ml-[5px]">*fl2_01.svg - Inkscape</h1>
      </header>
      <MenuBar />
      <Toolbars />
      <main className="flex flex-1">
        <Toolbox />
        <div className="flex min-w-0 flex-1 flex-col bg-[#f0f0f0]">
          <div className="flex">
            <HorizontalRuler />
          </div>
          <div className="flex flex-1">
            <VerticalRuler />
            <Canvas />
          </div>
          <div className="pl-4">
            <ScrollBar thumb="flex-1" />
          </div>
        </div>
      </main>
      <Palette />
      <ScrollBar thumb="w-[259px]" />
      <StatusBar />
    </div>
  );
}
